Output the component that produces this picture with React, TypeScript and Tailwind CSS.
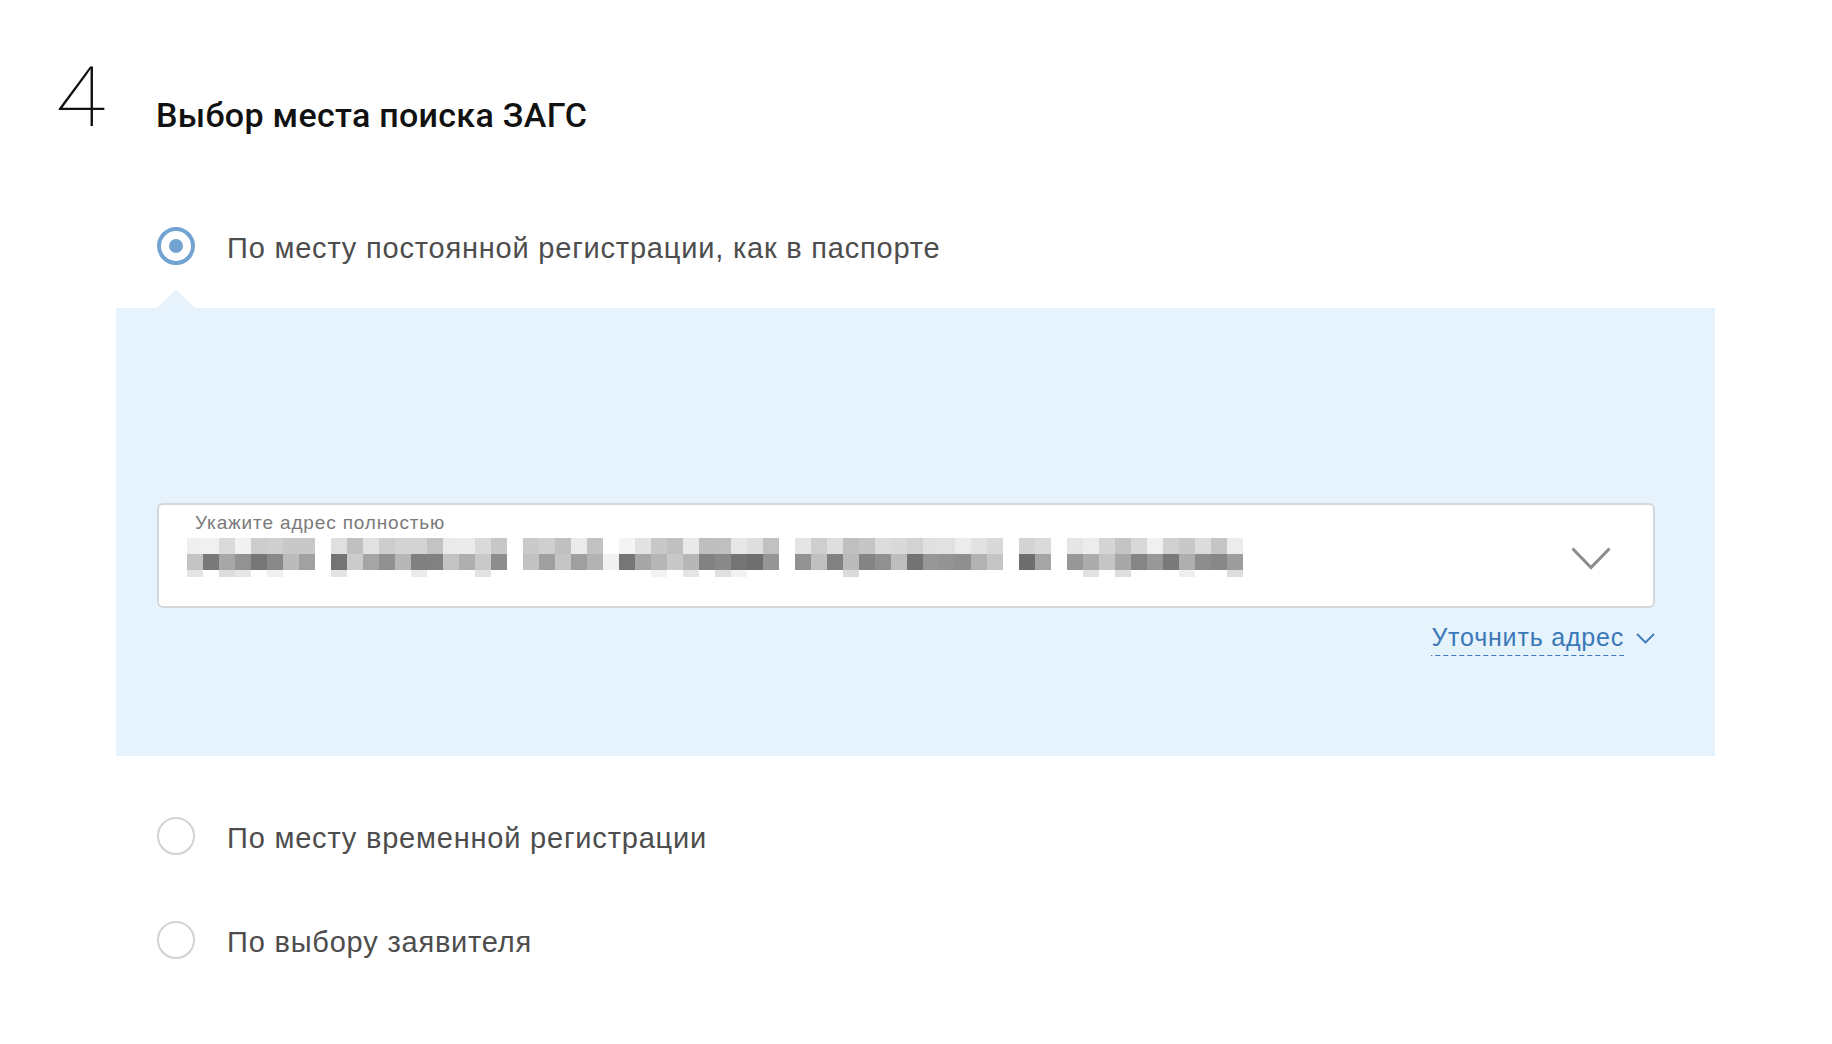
import React from "react";

const GAPS = new Set([8, 20, 26, 37, 51, 54]);
function shade(v: number) {
  const h = Math.max(0, Math.min(255, Math.round(v))).toString(16).padStart(2, "0");
  return `#${h}${h}${h}`;
}
let seed = 17;
const rnd = () => {
  seed = (seed * 9301 + 49297) % 233280;
  return seed / 233280;
};
const columns = Array.from({ length: 66 }, (_, i) => {
  if (GAPS.has(i)) {
    return { top: "#ffffff", mid: rnd() < 0.5 ? "#f1f1f1" : "#ffffff", bot: "#ffffff" };
  }
  const top = 190 + rnd() * 55;
  const mid = 108 + rnd() * 95;
  const bot = rnd() < 0.3 ? 218 + rnd() * 25 : 255;
  return { top: shade(top), mid: shade(mid), bot: shade(bot) };
});

function Radio({ checked }: { checked?: boolean }) {
  if (checked) {
    return (
      <div className="flex h-[38px] w-[38px] shrink-0 items-center justify-center rounded-full border-[4px] border-[#72a3d2] bg-white">
        <div className="h-[14px] w-[14px] rounded-full bg-[#72a3d2]" />
      </div>
    );
  }
  return <div className="h-[38px] w-[38px] shrink-0 rounded-full border-2 border-[#d2d2d2] bg-white" />;
}

function Option({ checked, label }: { checked?: boolean; label: string }) {
  return (
    <div className="ml-[157px] flex h-[38px] items-center gap-[32px]">
      <Radio checked={checked} />
      <span className="pt-[4px] text-[29px] leading-none tracking-[0.8px] text-[#4d4d4d]">{label}</span>
    </div>
  );
}

export default function App() {
  return (
    <div className="h-[1044px] w-full bg-white" style={{ fontFamily: '"Liberation Sans", Arial, sans-serif' }}>
      <div className="flex h-[137px] items-start pl-[55px] pt-[56px]">
        <div className="w-[101px] leading-none">
          <span
            className="inline-block origin-left scale-x-[1.1] text-[84px] font-thin leading-none text-[#111]"
            style={{ fontFamily: "Roboto, sans-serif" }}
          >
            4
          </span>
        </div>
        <div
          className="mt-[42px] text-[34px] font-medium leading-none tracking-[0.3px] text-[#111]"
          style={{ fontFamily: "Roboto, sans-serif" }}
        >
          Выбор места поиска ЗАГС
        </div>
      </div>

      <div className="mt-[90px]">
        <Option checked label="По месту постоянной регистрации, как в паспорте" />
      </div>

      <div className="ml-[157px] mt-[25px] h-0 w-0 border-x-[19px] border-b-[18px] border-x-transparent border-b-[#e6f3fc]" />
      <div className="ml-[116px] h-[448px] w-[1599px] bg-[#e6f3fc] pt-[195px]">
        <div className="ml-[41px] mr-[60px] flex h-[105px] items-start rounded-[6px] border-2 border-[#d3d8dc] bg-white pl-[36px]">
          <div className="flex-1 pt-[8px]">
            <div className="text-[19px] leading-none tracking-[0.85px] text-[#7a7a7a]">Укажите адрес полностью</div>
            <div className="-ml-[8px] mt-[6px] flex">
              {columns.map((c, i) => (
                <div key={i} className="flex w-[16px] flex-col">
                  <div className="h-[16px]" style={{ backgroundColor: c.top }} />
                  <div className="h-[16px]" style={{ backgroundColor: c.mid }} />
                  <div className="h-[7px]" style={{ backgroundColor: c.bot }} />
                </div>
              ))}
            </div>
          </div>
          <svg className="mr-[42px] mt-[42px]" width="40" height="23" viewBox="0 0 40 23" fill="none">
            <path d="M1.5 1.5 L20 20.5 L38.5 1.5" stroke="#8c8c8c" strokeWidth="3" />
          </svg>
        </div>
        <div className="mr-[60px] mt-[17px] flex items-center justify-end gap-[12px]">
          <span className="bg-[linear-gradient(to_right,#3a78b8_60%,transparent_0)] bg-[length:8px_1.5px] bg-bottom bg-repeat-x pb-[6px] text-[25px] leading-none tracking-[0.8px] text-[#3a78b8]">
            Уточнить адрес
          </span>
          <svg width="19" height="11" viewBox="0 0 19 11" fill="none" className="mt-[-4px]">
            <path d="M1 1 L9.5 9.5 L18 1" stroke="#3a78b8" strokeWidth="1.8" />
          </svg>
        </div>
      </div>

      <div className="mt-[61px]">
        <Option label="По месту временной регистрации" />
      </div>
      <div className="mt-[66px]">
        <Option label="По выбору заявителя" />
      </div>
    </div>
  );
}
